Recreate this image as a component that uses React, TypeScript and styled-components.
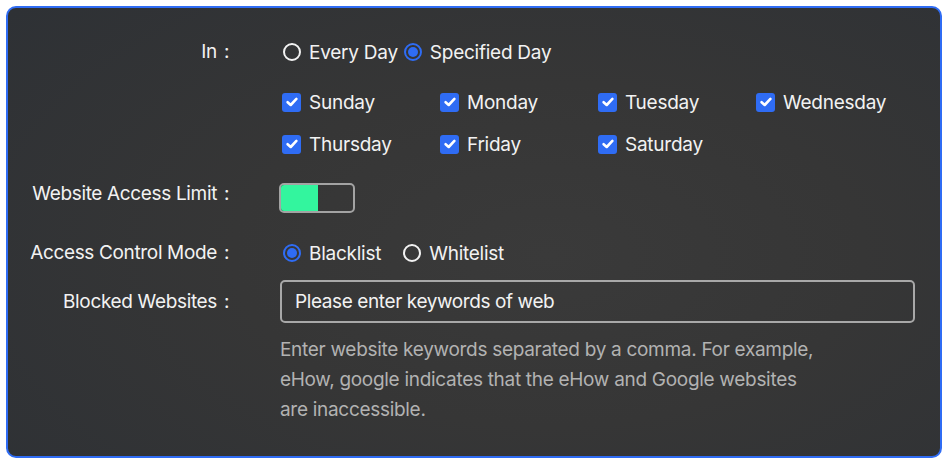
import React, { useState } from "react";
import styled, { createGlobalStyle } from "styled-components";

const GlobalStyle = createGlobalStyle`
  html, body {
    margin: 0;
    padding: 0;
    background: #ffffff;
  }
  * {
    box-sizing: border-box;
  }
`;

const DAYS = [
  "Sunday",
  "Monday",
  "Tuesday",
  "Wednesday",
  "Thursday",
  "Friday",
  "Saturday",
];

export default function App() {
  const [mode, setMode] = useState<"every" | "specified">("specified");
  const [access, setAccess] = useState<"black" | "white">("black");
  const [checked, setChecked] = useState<string[]>(DAYS);
  const [limit, setLimit] = useState(true);

  const toggleDay = (day: string) =>
    setChecked((prev) =>
      prev.includes(day) ? prev.filter((d) => d !== day) : [...prev, day]
    );

  return (
    <Page>
      <GlobalStyle />
      <Panel>
        <Field $top={29}>
          <Label>In</Label>
          <Content>
            <RadioRow $gap={3}>
              <Radio
                label="Every Day"
                selected={mode === "every"}
                onClick={() => setMode("every")}
              />
              <Radio
                label="Specified Day"
                selected={mode === "specified"}
                onClick={() => setMode("specified")}
              />
            </RadioRow>
            <DayGrid>
              {DAYS.map((day) => (
                <Check
                  key={day}
                  label={day}
                  checked={checked.includes(day)}
                  onClick={() => toggleDay(day)}
                />
              ))}
            </DayGrid>
          </Content>
        </Field>

        <Field $top={24}>
          <Label $height={22}>Website Access Limit</Label>
          <Content>
            <Switch onClick={() => setLimit(!limit)}>
              <SwitchFill $on={limit} />
            </Switch>
          </Content>
        </Field>

        <Field $top={25}>
          <Label>Access Control Mode</Label>
          <Content>
            <RadioRow $gap={19}>
              <Radio
                label="Blacklist"
                selected={access === "black"}
                onClick={() => setAccess("black")}
              />
              <Radio
                label="Whitelist"
                selected={access === "white"}
                onClick={() => setAccess("white")}
              />
            </RadioRow>
          </Content>
        </Field>

        <Field $top={12}>
          <Label $height={43}>Blocked Websites</Label>
          <Content>
            <Input placeholder="Please enter keywords of web" />
            <Help>
              Enter website keywords separated by a comma. For example,
              <br />
              eHow, google indicates that the eHow and Google websites
              <br />
              are inaccessible.
            </Help>
          </Content>
        </Field>
      </Panel>
    </Page>
  );
}

function Radio({
  label,
  selected,
  onClick,
}: {
  label: string;
  selected: boolean;
  onClick: () => void;
}) {
  return (
    <Option onClick={onClick}>
      <RadioDot $selected={selected} />
      <OptionText>{label}</OptionText>
    </Option>
  );
}

function Check({
  label,
  checked,
  onClick,
}: {
  label: string;
  checked: boolean;
  onClick: () => void;
}) {
  return (
    <Option onClick={onClick}>
      <CheckBox $checked={checked}>
        {checked && (
          <svg width="14" height="14" viewBox="0 0 14 14">
            <path
              d="M2.6 7.2 L5.7 10 L11.4 3.9"
              fill="none"
              stroke="#fff"
              strokeWidth="2.6"
              strokeLinecap="round"
              strokeLinejoin="round"
            />
          </svg>
        )}
      </CheckBox>
      <OptionText>{label}</OptionText>
    </Option>
  );
}

const Page = styled.div`
  width: 947px;
  height: 463px;
  padding: 6px 5px 5px 6px;
`;

const Panel = styled.div`
  width: 936px;
  height: 452px;
  border: 2px solid #2f6cf4;
  border-radius: 10px;
  background: radial-gradient(
    ellipse 75% 85% at 58% 55%,
    #3a3a3a 0%,
    #363636 45%,
    #2e3135 100%
  );
  font-family: Inter, "Noto Sans", sans-serif;
  color: #f2f2f2;
  font-size: 19px;
  overflow: hidden;
`;

const Field = styled.div<{ $top: number }>`
  display: grid;
  grid-template-columns: 221px 1fr;
  column-gap: 51px;
  margin-top: ${(p) => p.$top}px;
`;

const Label = styled.div<{ $height?: number }>`
  text-align: right;
  line-height: ${(p) => p.$height ?? 30}px;
  white-space: nowrap;
  letter-spacing: -0.35px;

  &::after {
    content: ":";
    display: inline-block;
    margin-left: 7px;
    width: 5px;
    text-align: left;
  }
`;

const Content = styled.div`
  display: flex;
  flex-direction: column;
  align-items: flex-start;
`;

const RadioRow = styled.div<{ $gap: number }>`
  display: flex;
  align-items: center;
  gap: ${(p) => p.$gap}px;
  height: 30px;
`;

const Option = styled.label`
  display: flex;
  align-items: center;
  gap: 8px;
  height: 30px;
  cursor: pointer;
  white-space: nowrap;
`;

const OptionText = styled.span`
  letter-spacing: -0.25px;
`;

const RadioDot = styled.span<{ $selected: boolean }>`
  width: 18px;
  height: 18px;
  margin-left: 3px;
  border-radius: 50%;
  border: 2px solid ${(p) => (p.$selected ? "#2f6cf4" : "#f2f2f2")};
  display: flex;
  align-items: center;
  justify-content: center;

  &::after {
    content: "";
    width: 10px;
    height: 10px;
    border-radius: 50%;
    background: #2f6cf4;
    display: ${(p) => (p.$selected ? "block" : "none")};
  }
`;

const CheckBox = styled.span<{ $checked: boolean }>`
  width: 19px;
  height: 19px;
  margin-left: 2px;
  border-radius: 3px;
  background: ${(p) => (p.$checked ? "#2f6cf4" : "transparent")};
  border: ${(p) => (p.$checked ? "none" : "2px solid #f2f2f2")};
  display: flex;
  align-items: center;
  justify-content: center;
`;

const DayGrid = styled.div`
  display: grid;
  grid-template-columns: repeat(4, 158px);
  row-gap: 12px;
  margin-top: 20px;
`;

const Switch = styled.div`
  width: 76px;
  height: 30px;
  margin-left: -1px;
  border: 2px solid #a3a3a3;
  border-radius: 5px;
  overflow: hidden;
  cursor: pointer;
  display: flex;
`;

const SwitchFill = styled.div<{ $on: boolean }>`
  width: 37px;
  height: 100%;
  background: ${(p) => (p.$on ? "#33f59e" : "#6a6a6a")};
  margin-left: ${(p) => (p.$on ? "0" : "auto")};
`;

const Input = styled.input`
  width: 635px;
  height: 43px;
  border: 2px solid #a8a8a8;
  border-radius: 5px;
  background: transparent;
  padding: 0 13px;
  font-family: Inter, "Noto Sans", sans-serif;
  font-size: 19px;
  letter-spacing: -0.4px;
  color: #f2f2f2;
  outline: none;

  &::placeholder {
    color: #f2f2f2;
  }
`;

const Help = styled.p`
  margin: 12px 0 0;
  font-size: 19px;
  line-height: 30px;
  letter-spacing: -0.3px;
  color: #b2b2b2;
`;
